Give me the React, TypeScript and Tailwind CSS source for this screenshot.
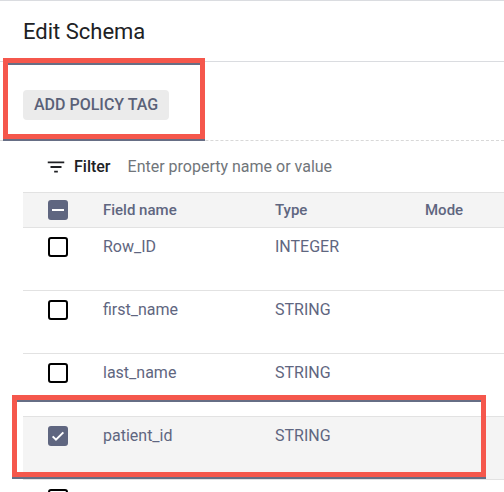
import React from "react"

const rows = [
  { name: "Row_ID", type: "INTEGER", checked: false },
  { name: "first_name", type: "STRING", checked: false },
  { name: "last_name", type: "STRING", checked: false },
  { name: "patient_id", type: "STRING", checked: true },
  { name: "", type: "", checked: false },
]

function Checkbox({ state }: { state: "off" | "on" | "mixed" }) {
  if (state === "off") {
    return <div className="w-[20px] h-[20px] rounded-[3px] border-2 border-black bg-white" />
  }
  return (
    <div className="w-[20px] h-[20px] rounded-[3px] bg-[#5f6680] flex items-center justify-center">
      {state === "on" ? (
        <svg width="16" height="16" viewBox="0 0 24 24">
          <path d="M4 12.5l5 5L20 6.5" fill="none" stroke="white" strokeWidth="3" />
        </svg>
      ) : (
        <div className="w-[12px] h-[2px] bg-white" />
      )}
    </div>
  )
}

export default function App() {
  return (
    <div
      className="relative w-[504px] h-[492px] overflow-hidden bg-white border-t border-[#dadce0]"
      style={{ fontFamily: "Roboto, 'Liberation Sans', sans-serif" }}
    >
      {/* Title */}
      <div className="h-[61px] flex items-center pl-[23px] text-[22px] text-[#202124] border-b border-[#dadce0]">
        Edit Schema
      </div>

      {/* Toolbar */}
      <div className="h-[79px] pt-[28px] border-b border-dashed border-[#d8d8d8]">
        <button className="ml-[23px] h-[30px] px-[11px] rounded-[4px] bg-[#ebebeb] text-[16px] font-medium text-[#5a6178]">
          ADD POLICY TAG
        </button>
      </div>

      {/* Filter */}
      <div className="h-[51px] flex items-center pl-[45px]">
        <svg width="22" height="22" viewBox="0 0 24 24">
          <path d="M10 18h4v-2h-4v2zM3 6v2h18V6H3zm3 7h12v-2H6v2z" fill="#202124" />
        </svg>
        <span className="ml-[7px] text-[16px] font-medium text-[#202124]">Filter</span>
        <span className="ml-[17px] text-[16px] text-[#70757a]">Enter property name or value</span>
      </div>

      {/* Table */}
      <div className="ml-[23px]">
        <div className="h-[36px] grid grid-cols-[80px_172px_150px_1fr] items-center bg-[#f4f4f4] border-t border-b border-[#e2e2e2] text-[15px] font-medium text-[#5f6680]">
          <div className="pl-[25px]">
            <Checkbox state="mixed" />
          </div>
          <div>Field name</div>
          <div>Type</div>
          <div>Mode</div>
        </div>
        {rows.map((r, i) => (
          <div
            key={i}
            className={
              "h-[63px] grid grid-cols-[80px_172px_150px_1fr] items-start pt-[9px] border-b border-[#e2e2e2] text-[16px] leading-[20px] text-[#5f6680] " +
              (r.checked ? "bg-[#f4f4f4]" : "bg-white")
            }
          >
            <div className="pl-[25px]">
              <Checkbox state={r.checked ? "on" : "off"} />
            </div>
            <div>{r.name}</div>
            <div>{r.type}</div>
            <div />
          </div>
        ))}
      </div>

      {/* Highlight boxes */}
      <div className="absolute left-[3px] top-[57px] w-[202px] h-[81px] border-[5px] border-[#f5574c] shadow-[0_2px_0_#666e85,inset_0_2px_0_#666e85]" />
      <div className="absolute left-[12px] top-[394px] w-[474px] h-[82px] border-[5px] border-[#f5574c] shadow-[0_2px_0_#666e85,inset_0_2px_0_#666e85]" />
    </div>
  )
}
